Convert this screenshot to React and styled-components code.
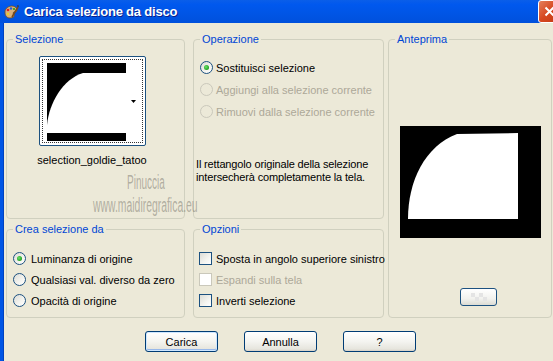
import React from "react";
import styled, { createGlobalStyle } from "styled-components";

const GlobalStyle = createGlobalStyle`
  html, body {
    margin: 0;
    padding: 0;
    background: #ece9d8;
    overflow: hidden;
  }
  body {
    font-family: "Liberation Sans", Arial, sans-serif;
    font-size: 11px;
    color: #000;
  }
`;

const Window = styled.div`
  width: 553px;
  height: 361px;
  display: flex;
  flex-direction: column;
  background: #ece9d8;
  overflow: hidden;
`;

const TitleBar = styled.div`
  height: 23px;
  display: flex;
  align-items: center;
  gap: 5px;
  padding-left: 3px;
  background: linear-gradient(
    to bottom,
    #0a5ee9 0%,
    #0058ee 20%,
    #0055e5 60%,
    #0050dc 100%
  );
  overflow: hidden;
`;

const TitleText = styled.span`
  flex: 1;
  color: #fff;
  font-weight: bold;
  font-size: 13px;
  letter-spacing: -0.2px;
  text-shadow: 1px 1px 0 #0a1f8c;
`;

const CloseButton = styled.div`
  width: 21px;
  height: 21px;
  margin-right: -8px;
  border: 1px solid #fff;
  border-radius: 3px;
  background: linear-gradient(135deg, #e4805c 0%, #d6471f 50%, #c13a15 100%);
  display: flex;
  align-items: center;
  justify-content: center;
`;

const Body = styled.div`
  flex: 1;
  display: flex;
  flex-direction: column;
  border-left: 3px solid #0055e5;
  box-shadow: inset 1px 0 0 #0042c0;
`;

const Groups = styled.div`
  display: grid;
  grid-template-columns: 179px 191px 164px;
  grid-template-rows: 186px 95px;
  column-gap: 8px;
  row-gap: 4px;
  padding: 10px 0 0 3px;
`;

const Group = styled.fieldset`
  margin: 0 ${({ $shift }) => -($shift || 0)}px 0 ${({ $shift }) => $shift || 0}px;
  padding: 0;
  border: 1px solid #d0d0bf;
  border-radius: 4px;
  min-width: 0;
  grid-column: ${({ $col }) => $col};
  grid-row: ${({ $row }) => $row};
  display: flex;
  flex-direction: column;
`;

const Legend = styled.legend`
  margin-left: 6px;
  padding: 0 2px;
  color: #0046d5;
  font-size: 11px;
  line-height: 13px;
`;

const ThumbColumn = styled.div`
  width: 110px;
  margin: 10px 0 0 30px;
  display: flex;
  flex-direction: column;
  align-items: center;
`;

const ThumbFrame = styled.div`
  width: 101px;
  height: 84px;
  border: 1px solid #1c5180;
  border-radius: 2px;
  background: #fff;
  padding: 2px;
  box-sizing: content-box;
  display: flex;
`;

const ThumbFocus = styled.div`
  flex: 1;
  border: 1px dotted #333;
  display: flex;
  align-items: center;
  padding: 1px 0 0 4px;
  gap: 5px;
`;

const ThumbLabel = styled.div`
  margin-top: 8px;
  white-space: nowrap;
`;

const Watermark = styled.div`
  margin: 4px 0 0 0;
  display: flex;
  flex-direction: column;
  align-items: flex-start;
  color: rgba(125, 122, 112, 0.55);
  font-family: "Liberation Sans Narrow", "Liberation Sans", sans-serif;
  white-space: nowrap;
`;

const WatermarkLine = styled.span`
  font-size: 20px;
  line-height: ${({ $lh }) => $lh}px;
  margin-left: ${({ $indent }) => $indent}px;
  transform: scaleX(${({ $scale }) => $scale});
  transform-origin: left center;
`;

const OptionList = styled.div`
  display: flex;
  flex-direction: column;
  padding: ${({ $pad }) => $pad};
  gap: ${({ $gap }) => $gap}px;
`;

const OptionRow = styled.label`
  display: flex;
  align-items: center;
  height: 13px;
  gap: ${({ $gap }) => $gap}px;
  color: ${({ $disabled }) => ($disabled ? "#aca899" : "#000")};
  white-space: nowrap;
`;

const Radio = styled.span`
  width: 11px;
  height: 11px;
  flex: none;
  border-radius: 50%;
  border: 1px solid ${({ $disabled }) => ($disabled ? "#cac8bb" : "#1c5180")};
  background: ${({ $disabled }) =>
    $disabled
      ? "#ece9d8"
      : "linear-gradient(135deg, #dcdcd6 0%, #f4f4f0 60%, #fff 100%)"};
  display: flex;
  align-items: center;
  justify-content: center;

  &::after {
    content: "";
    width: 5px;
    height: 5px;
    border-radius: 50%;
    background: radial-gradient(circle at 40% 40%, #6be26b, #21a121 70%);
    display: ${({ $checked }) => ($checked ? "block" : "none")};
  }
`;

const Checkbox = styled.span`
  width: 11px;
  height: 11px;
  flex: none;
  border: 1px solid ${({ $disabled }) => ($disabled ? "#cac8bb" : "#1c5180")};
  background: ${({ $disabled }) =>
    $disabled
      ? "#fff"
      : "linear-gradient(135deg, #dcdcd6 0%, #f4f4f0 60%, #fff 100%)"};
`;

const Note = styled.p`
  margin: 40px 0 0 2px;
  line-height: 13px;
  white-space: nowrap;
  letter-spacing: -0.15px;
`;

const PreviewArea = styled.div`
  flex: 1;
  display: flex;
  flex-direction: column;
  align-items: center;
`;

const PreviewImage = styled.div`
  width: 141px;
  height: 112px;
  margin: 80px 0 0 1px;
  background: #000;
  display: flex;
`;

const SmallButton = styled.div`
  width: 35px;
  height: 16px;
  margin: 50px 0 0 17px;
  border: 1px solid #1c5180;
  border-radius: 3px;
  background: linear-gradient(to bottom, #fff 0%, #f2f2ee 60%, #dcdcd4 100%);
  display: flex;
  align-items: center;
  justify-content: center;
`;

const ButtonRow = styled.div`
  display: flex;
  gap: 26px;
  padding: 13px 0 0 142px;
`;

const Button = styled.button`
  width: 73px;
  height: 21px;
  padding: 0;
  font-family: "Liberation Sans", Arial, sans-serif;
  font-size: 11px;
  color: #000;
  border: 1px solid #003c74;
  border-radius: 3px;
  background: linear-gradient(to bottom, #fff 0%, #f4f4f0 50%, #e6e5dd 90%, #d6d0c5 100%);
  box-shadow: ${({ $default }) =>
    $default ? "inset 0 0 0 1px #cee7ff, inset 0 -1px 0 1px #98b8ea" : "none"};
`;

const AppIcon = () => (
  <svg width="16" height="16" viewBox="0 0 16 16">
    <path
      d="M2 8c0-4 4-6 7-6s5 2 5 4-2 2-3 2-1 2 0 3-1 3-4 3-5-2-5-6z"
      fill="#d9b07a"
      stroke="#6b4a20"
      strokeWidth="0.8"
    />
    <circle cx="5" cy="6" r="1.3" fill="#e02020" />
    <circle cx="8" cy="4.5" r="1.2" fill="#2060e0" />
    <circle cx="11" cy="5" r="1.1" fill="#20a020" />
    <circle cx="5" cy="10" r="1.2" fill="#f0d020" />
    <path d="M9 13 L15 3" stroke="#7a4a1a" strokeWidth="1.6" />
    <path d="M14.5 2.5 L15.5 1.5" stroke="#333" strokeWidth="1.6" />
  </svg>
);

const CloseIcon = () => (
  <svg width="11" height="11" viewBox="0 0 11 11">
    <path d="M1.5 1.5 L9.5 9.5 M9.5 1.5 L1.5 9.5" stroke="#fff" strokeWidth="2" />
  </svg>
);

const SelectionThumb = () => (
  <svg width="79" height="78" viewBox="0 0 79 78">
    <rect width="79" height="78" fill="#000" />
    <path d="M0 70 L0 62 C2 40 16 16 36 10 L79 10 L79 70 Z" fill="#fff" />
  </svg>
);

const DropArrow = () => (
  <svg width="5" height="3" viewBox="0 0 5 3">
    <path d="M0 0 L5 0 L2.5 3 Z" fill="#000" />
  </svg>
);

const PreviewShape = () => (
  <svg width="141" height="112" viewBox="0 0 141 112">
    <path d="M8 93 C8 55 25 20 57 8 L118 7 L118 93 Z" fill="#fff" />
  </svg>
);

const CheckerIcon = () => (
  <svg width="16" height="8" viewBox="0 0 16 8">
    <rect x="0" y="0" width="4" height="4" fill="#e4e4e4" />
    <rect x="8" y="0" width="4" height="4" fill="#e4e4e4" />
    <rect x="4" y="4" width="4" height="4" fill="#e4e4e4" />
    <rect x="12" y="4" width="4" height="4" fill="#e4e4e4" />
  </svg>
);

const operations = [
  { label: "Sostituisci selezione", checked: true },
  { label: "Aggiungi alla selezione corrente", disabled: true },
  { label: "Rimuovi dalla selezione corrente", disabled: true },
];

const sources = [
  { label: "Luminanza di origine", checked: true },
  { label: "Qualsiasi val. diverso da zero" },
  { label: "Opacità di origine" },
];

const options = [
  { label: "Sposta in angolo superiore sinistro" },
  { label: "Espandi sulla tela", disabled: true },
  { label: "Inverti selezione" },
];

const App = () => (
  <>
    <GlobalStyle />
    <Window>
      <TitleBar>
        <AppIcon />
        <TitleText>Carica selezione da disco</TitleText>
        <CloseButton>
          <CloseIcon />
        </CloseButton>
      </TitleBar>
      <Body>
        <Groups>
          <Group $col="1" $row="1">
            <Legend>Selezione</Legend>
            <ThumbColumn>
              <ThumbFrame>
                <ThumbFocus>
                  <SelectionThumb />
                  <DropArrow />
                </ThumbFocus>
              </ThumbFrame>
              <ThumbLabel>selection_goldie_tatoo</ThumbLabel>
            </ThumbColumn>
            <Watermark>
              <WatermarkLine $lh={24} $indent={120} $scale={0.5}>
                Pinuccia
              </WatermarkLine>
              <WatermarkLine $lh={22} $indent={86} $scale={0.52}>
                www.maidiregrafica.eu
              </WatermarkLine>
            </Watermark>
          </Group>

          <Group $col="2" $row="1">
            <Legend>Operazione</Legend>
            <OptionList $pad="15px 0 0 6px" $gap={9}>
              {operations.map((o) => (
                <OptionRow key={o.label} $gap={3} $disabled={o.disabled}>
                  <Radio $checked={o.checked} $disabled={o.disabled} />
                  {o.label}
                </OptionRow>
              ))}
            </OptionList>
            <Note>
              Il rettangolo originale della selezione
              <br />
              intersecherà completamente la tela.
            </Note>
          </Group>

          <Group $col="3" $row="1 / span 2" $shift={-4}>
            <Legend>Anteprima</Legend>
            <PreviewArea>
              <PreviewImage>
                <PreviewShape />
              </PreviewImage>
              <SmallButton>
                <CheckerIcon />
              </SmallButton>
            </PreviewArea>
          </Group>

          <Group $col="1" $row="2">
            <Legend>Crea selezione da</Legend>
            <OptionList $pad="16px 0 0 6px" $gap={8}>
              {sources.map((o) => (
                <OptionRow key={o.label} $gap={5}>
                  <Radio $checked={o.checked} />
                  {o.label}
                </OptionRow>
              ))}
            </OptionList>
          </Group>

          <Group $col="2" $row="2">
            <Legend>Opzioni</Legend>
            <OptionList $pad="16px 0 0 5px" $gap={8}>
              {options.map((o) => (
                <OptionRow key={o.label} $gap={4} $disabled={o.disabled}>
                  <Checkbox $disabled={o.disabled} />
                  {o.label}
                </OptionRow>
              ))}
            </OptionList>
          </Group>
        </Groups>

        <ButtonRow>
          <Button $default>Carica</Button>
          <Button>Annulla</Button>
          <Button>?</Button>
        </ButtonRow>
      </Body>
    </Window>
  </>
);

export default App;
